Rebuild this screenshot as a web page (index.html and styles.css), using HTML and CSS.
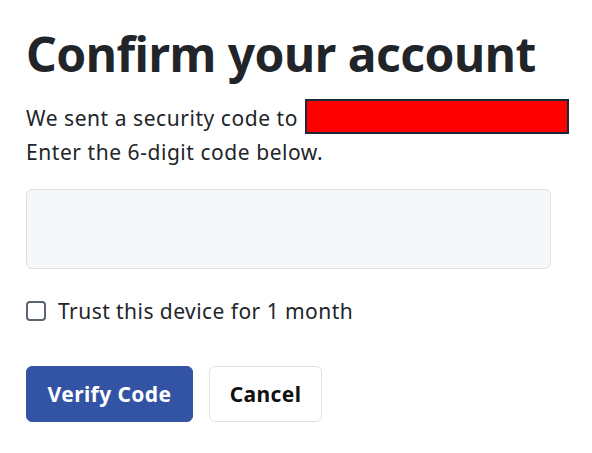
FILE: index.html
```html
<!DOCTYPE html>
<html lang="en">
<head>
<meta charset="utf-8">
<title>Confirm your account</title>
<link rel="stylesheet" href="styles.css">
</head>
<body>
<main class="page">
  <h1 class="title">Confirm your account</h1>
  <p class="lead">We sent a security code to <span class="redacted"></span><br>Enter the 6-digit code below.</p>
  <input class="code-input" type="text" aria-label="Security code">
  <label class="trust"><input type="checkbox" class="trust-box"><span>Trust this device for 1 month</span></label>
  <div class="actions">
    <button class="btn btn-primary">Verify Code</button>
    <button class="btn btn-secondary">Cancel</button>
  </div>
</main>
</body>
</html>
```

FILE: styles.css
```css
html, body {
  margin: 0;
  padding: 0;
  background: #ffffff;
}
body {
  font-family: "Noto Sans", "Open Sans", sans-serif;
  color: #212529;
}
.page {
  padding: 22px 10px 0 26px;
  display: flex;
  flex-direction: column;
  align-items: flex-start;
}
.title {
  margin: 0;
  font-size: 48px;
  font-weight: 700;
  line-height: 64px;
  letter-spacing: -0.5px;
  color: #212529;
}
.lead {
  margin: 13px 0 0 0;
  font-size: 21px;
  line-height: 34px;
  letter-spacing: 0.55px;
  white-space: nowrap;
}
.redacted {
  display: inline-block;
  width: 260px;
  height: 31px;
  background: #ff0000;
  border: 2px solid #1b2a36;
  vertical-align: -8px;
  margin-left: 1px;
}
.code-input {
  margin: 20px 0 0 0;
  width: 525px;
  height: 80px;
  box-sizing: border-box;
  background: #f6f7f9;
  border: 1px solid #dfe1e5;
  border-radius: 6px;
  font-size: 20px;
  padding: 0 16px;
  outline: none;
}
.trust {
  margin-top: 30px;
  display: flex;
  align-items: center;
  gap: 12px;
  font-size: 21px;
  line-height: 24px;
  letter-spacing: 0.45px;
}
.trust-box {
  appearance: none;
  -webkit-appearance: none;
  margin: 0;
  width: 20px;
  height: 20px;
  box-sizing: border-box;
  border: 2px solid #5c6371;
  border-radius: 4px;
  background: #fff;
}
.actions {
  margin-top: 43px;
  display: flex;
  gap: 16px;
}
.btn {
  font-family: "Noto Sans", "Open Sans", sans-serif;
  font-size: 21px;
  font-weight: 700;
  letter-spacing: 0.4px;
  height: 56px;
  border-radius: 6px;
  padding: 0;
  cursor: pointer;
}
.btn-primary {
  background: #3353a4;
  border: 1px solid #3353a4;
  color: #ffffff;
  width: 167px;
}
.btn-secondary {
  background: #ffffff;
  border: 1px solid #dfe1e5;
  color: #111111;
  width: 113px;
}
```
